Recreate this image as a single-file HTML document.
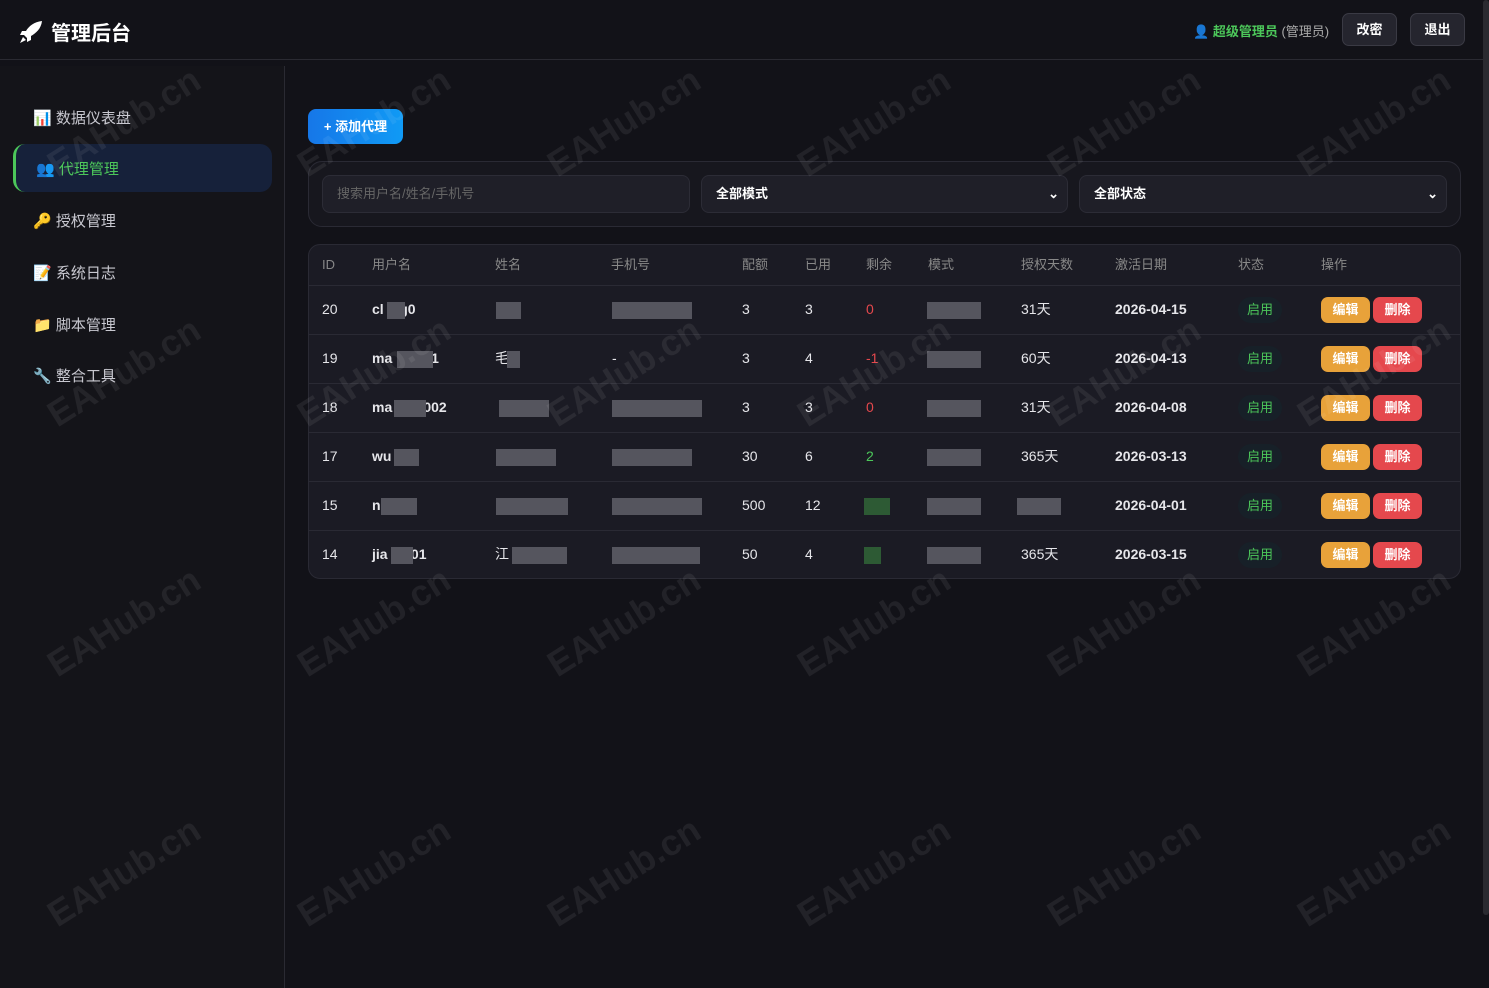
<!DOCTYPE html><html><head><meta charset="utf-8"><style>
*{box-sizing:border-box;margin:0;padding:0}
body{width:1489px;height:988px;background:#121218;font-family:"Liberation Sans","Noto Sans CJK SC",sans-serif;color:#d8d8de;position:relative;overflow:hidden;font-size:14px}
.hdr{position:absolute;left:0;top:0;width:1483px;height:60px;border-bottom:1px solid #2a2a32;background:#121218}
.logo{position:absolute;left:19px;top:17px;font-size:20px;font-weight:bold;color:#fff;display:flex;align-items:center;gap:8px}
.user{position:absolute;left:1193px;top:21px;font-size:13px;color:#aaa}
.user b{color:#4cc75a}
.hb{position:absolute;top:13px;height:33px;border:1px solid #3a3a44;background:#25252e;border-radius:7px;color:#fff;font-size:13px;font-weight:bold;text-align:center;line-height:31px}
.side{position:absolute;left:0;top:66px;width:285px;height:922px;border-right:1px solid #2a2a32;background:#141419}
.nav{position:absolute;left:33px;font-size:15px;color:#c8c8d0;display:flex;align-items:center;gap:6px}
.act{position:absolute;left:13px;top:144px;width:259px;height:48px;border-left:3px solid #4cc75a;border-radius:12px;background:#16213a}
.scroll{position:absolute;left:1483px;top:0;width:6px;height:915px;background:#2a2a30;border-radius:3px}
.add{position:absolute;left:308px;top:109px;width:95px;height:35px;border-radius:8px;background:linear-gradient(90deg,#1677e8,#109af5);color:#fff;font-size:13px;font-weight:bold;line-height:35px;text-align:center}
.filt{position:absolute;left:308px;top:161px;width:1153px;height:66px;border:1px solid #2a2a34;border-radius:14px;background:#17171e}
.in{position:absolute;top:13px;height:38px;border:1px solid #2c2c36;border-radius:8px;background:#1f1f28;font-size:13px;line-height:36px;padding-left:14px}
.tbl{position:absolute;left:308px;top:244px;width:1153px;height:335px;border:1px solid #2a2a34;border-radius:12px;background:#1b1b24;overflow:hidden}
.th{position:absolute;top:0;height:40px;line-height:40px;font-size:13px;color:#888}
.row{position:absolute;left:0;width:1153px;height:49px;border-top:1px solid #2a2a34}
.c{position:absolute;top:-1px;line-height:48px;font-size:14px;color:#e6e6ea}
.bl{position:absolute;top:16px;height:17px;background:#55555e}
.st{position:absolute;left:929px;top:11px;width:44px;height:26px;border-radius:13px;background:#172028;color:#4cc75a;font-size:13px;line-height:26px;text-align:center}
.ed,.de{position:absolute;top:11px;width:49px;height:26px;border-radius:7px;color:#fff;font-size:13px;font-weight:bold;line-height:26px;text-align:center}
.ed{left:1012px;background:#e8a23a}.de{left:1064px;background:#e5484d}
.wm{position:absolute;font-size:36px;font-weight:bold;color:rgba(255,255,255,0.07);transform:translate(-50%,-50%) rotate(-32deg);white-space:nowrap;pointer-events:none}
</style></head><body>
<div class="hdr">
<div class="logo"><svg width="24" height="24" viewBox="0 0 24 24"><path d="M23 1C15 2 10 6 7 11L3 11 1 15 5 15 8 18 8 22 12 20 12 16C17 13 22 9 23 1Z" fill="#fff"/><path d="M4 17 1 23 7 20Z" fill="#fff"/></svg>管理后台</div>
<div class="user">👤 <b>超级管理员</b> (管理员)</div>
<div class="hb" style="left:1342px;width:55px">改密</div>
<div class="hb" style="left:1410px;width:55px">退出</div>
</div>
<div class="scroll"></div>
<div class="side"></div>
<div class="act"></div>
<div class="nav" style="top:107px">📊 数据仪表盘</div>
<div class="nav" style="top:158px;left:36px;color:#4cc75a">👥 代理管理</div>
<div class="nav" style="top:210px">🔑 授权管理</div>
<div class="nav" style="top:262px">📝 系统日志</div>
<div class="nav" style="top:314px">📁 脚本管理</div>
<div class="nav" style="top:365px">🔧 整合工具</div>
<div class="add">+ 添加代理</div>
<div class="filt">
<div class="in" style="left:13px;width:368px;color:#666">搜索用户名/姓名/手机号</div>
<div class="in" style="left:392px;width:367px;color:#fff;font-weight:bold">全部模式<span style="position:absolute;right:8px">⌄</span></div>
<div class="in" style="left:770px;width:368px;color:#fff;font-weight:bold">全部状态<span style="position:absolute;right:8px">⌄</span></div>
</div>
<div class="tbl">
<div class="th" style="left:13px">ID</div><div class="th" style="left:63px">用户名</div><div class="th" style="left:186px">姓名</div><div class="th" style="left:302px">手机号</div><div class="th" style="left:433px">配额</div><div class="th" style="left:496px">已用</div><div class="th" style="left:557px">剩余</div><div class="th" style="left:619px">模式</div><div class="th" style="left:712px">授权天数</div><div class="th" style="left:806px">激活日期</div><div class="th" style="left:929px">状态</div><div class="th" style="left:1012px">操作</div>
<div class="row" style="top:40px"><div class="c" style="left:13px">20</div><div class="c" style="left:63px;font-weight:bold">cl&nbsp;&nbsp;&nbsp;&nbsp;g0</div><div class="bl" style="left:78px;width:18px"></div><div class="bl" style="left:187px;width:25px"></div><div class="bl" style="left:303px;width:80px"></div><div class="c" style="left:433px">3</div><div class="c" style="left:496px">3</div><div class="c" style="left:557px;color:#e5484d">0</div><div class="bl" style="left:618px;width:54px"></div><div class="c" style="left:712px">31天</div><div class="c" style="left:806px;font-weight:bold">2026-04-15</div><div class="st">启用</div><div class="ed">编辑</div><div class="de">删除</div></div>
<div class="row" style="top:89px"><div class="c" style="left:13px">19</div><div class="c" style="left:63px;font-weight:bold">ma&nbsp;&nbsp;&nbsp;&nbsp;&nbsp;&nbsp;&nbsp;&nbsp;01</div><div class="bl" style="left:88px;width:36px"></div><div class="c" style="left:186px">毛</div><div class="bl" style="left:198px;width:13px"></div><div class="c" style="left:303px">-</div><div class="c" style="left:433px">3</div><div class="c" style="left:496px">4</div><div class="c" style="left:557px;color:#e5484d">-1</div><div class="bl" style="left:618px;width:54px"></div><div class="c" style="left:712px">60天</div><div class="c" style="left:806px;font-weight:bold">2026-04-13</div><div class="st">启用</div><div class="ed">编辑</div><div class="de">删除</div></div>
<div class="row" style="top:138px"><div class="c" style="left:13px">18</div><div class="c" style="left:63px;font-weight:bold">ma&nbsp;&nbsp;&nbsp;&nbsp;&nbsp;&nbsp;&nbsp;&nbsp;002</div><div class="bl" style="left:85px;width:32px"></div><div class="bl" style="left:190px;width:50px"></div><div class="bl" style="left:303px;width:90px"></div><div class="c" style="left:433px">3</div><div class="c" style="left:496px">3</div><div class="c" style="left:557px;color:#e5484d">0</div><div class="bl" style="left:618px;width:54px"></div><div class="c" style="left:712px">31天</div><div class="c" style="left:806px;font-weight:bold">2026-04-08</div><div class="st">启用</div><div class="ed">编辑</div><div class="de">删除</div></div>
<div class="row" style="top:187px"><div class="c" style="left:13px">17</div><div class="c" style="left:63px;font-weight:bold">wu&nbsp;&nbsp;&nbsp;&nbsp;&nbsp;&nbsp;l</div><div class="bl" style="left:85px;width:25px"></div><div class="bl" style="left:187px;width:60px"></div><div class="bl" style="left:303px;width:80px"></div><div class="c" style="left:433px">30</div><div class="c" style="left:496px">6</div><div class="c" style="left:557px;color:#4cc75a">2</div><div class="bl" style="left:618px;width:54px"></div><div class="c" style="left:712px">365天</div><div class="c" style="left:806px;font-weight:bold">2026-03-13</div><div class="st">启用</div><div class="ed">编辑</div><div class="de">删除</div></div>
<div class="row" style="top:236px"><div class="c" style="left:13px">15</div><div class="c" style="left:63px;font-weight:bold">n</div><div class="bl" style="left:72px;width:36px"></div><div class="bl" style="left:187px;width:72px"></div><div class="bl" style="left:303px;width:90px"></div><div class="c" style="left:433px">500</div><div class="c" style="left:496px">12</div><div class="bl" style="left:555px;width:26px;background:#2d5a34"></div><div class="bl" style="left:618px;width:54px"></div><div class="bl" style="left:708px;width:44px"></div><div class="c" style="left:806px;font-weight:bold">2026-04-01</div><div class="st">启用</div><div class="ed">编辑</div><div class="de">删除</div></div>
<div class="row" style="top:285px"><div class="c" style="left:13px">14</div><div class="c" style="left:63px;font-weight:bold">jia&nbsp;&nbsp;&nbsp;&nbsp;&nbsp;&nbsp;01</div><div class="bl" style="left:82px;width:22px"></div><div class="c" style="left:186px">江</div><div class="bl" style="left:203px;width:55px"></div><div class="bl" style="left:303px;width:88px"></div><div class="c" style="left:433px">50</div><div class="c" style="left:496px">4</div><div class="bl" style="left:555px;width:17px;background:#2d5a34"></div><div class="bl" style="left:618px;width:54px"></div><div class="c" style="left:712px">365天</div><div class="c" style="left:806px;font-weight:bold">2026-03-15</div><div class="st">启用</div><div class="ed">编辑</div><div class="de">删除</div></div>
</div>
<div class="wm" style="left:124px;top:122px">EAHub.cn</div><div class="wm" style="left:374px;top:122px">EAHub.cn</div><div class="wm" style="left:624px;top:122px">EAHub.cn</div><div class="wm" style="left:874px;top:122px">EAHub.cn</div><div class="wm" style="left:1124px;top:122px">EAHub.cn</div><div class="wm" style="left:1374px;top:122px">EAHub.cn</div>
<div class="wm" style="left:124px;top:372px">EAHub.cn</div><div class="wm" style="left:374px;top:372px">EAHub.cn</div><div class="wm" style="left:624px;top:372px">EAHub.cn</div><div class="wm" style="left:874px;top:372px">EAHub.cn</div><div class="wm" style="left:1124px;top:372px">EAHub.cn</div><div class="wm" style="left:1374px;top:372px">EAHub.cn</div>
<div class="wm" style="left:124px;top:622px">EAHub.cn</div><div class="wm" style="left:374px;top:622px">EAHub.cn</div><div class="wm" style="left:624px;top:622px">EAHub.cn</div><div class="wm" style="left:874px;top:622px">EAHub.cn</div><div class="wm" style="left:1124px;top:622px">EAHub.cn</div><div class="wm" style="left:1374px;top:622px">EAHub.cn</div>
<div class="wm" style="left:124px;top:872px">EAHub.cn</div><div class="wm" style="left:374px;top:872px">EAHub.cn</div><div class="wm" style="left:624px;top:872px">EAHub.cn</div><div class="wm" style="left:874px;top:872px">EAHub.cn</div><div class="wm" style="left:1124px;top:872px">EAHub.cn</div><div class="wm" style="left:1374px;top:872px">EAHub.cn</div>
</body></html>
